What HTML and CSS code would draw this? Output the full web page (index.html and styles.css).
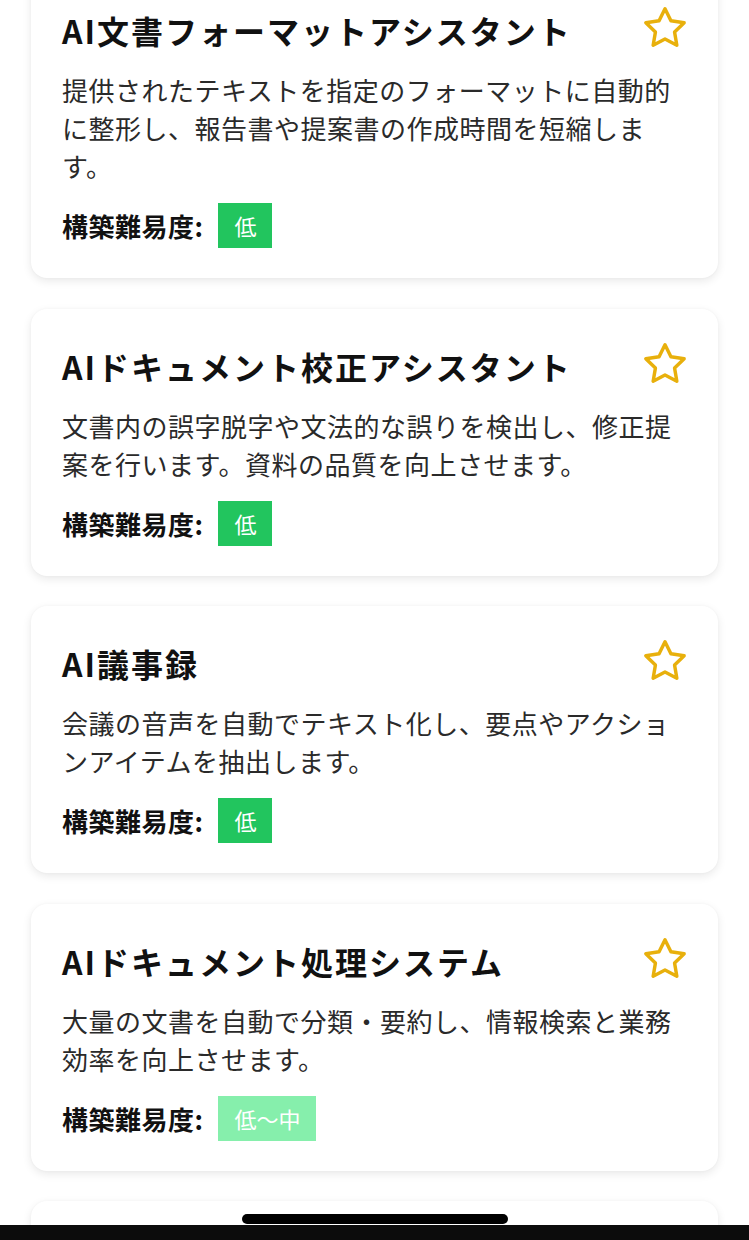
FILE: index.html
```html
<!DOCTYPE html>
<html lang="ja">
<head>
<meta charset="utf-8">
<title>AIツール一覧</title>
<link rel="stylesheet" href="styles.css">
</head>
<body>
<main class="list">
  <article class="card">
    <header class="card-head">
      <h2 class="card-title">AI文書フォーマットアシスタント</h2>
      <svg class="star" viewBox="0 0 24 24"><path d="M12 2l3.09 6.26L22 9.27l-5 4.87 1.18 6.88L12 17.77l-6.18 3.25L7 14.14 2 9.27l6.91-1.01L12 2z"/></svg>
    </header>
    <p class="card-desc">提供されたテキストを指定のフォーマットに自動的に整形し、報告書や提案書の作成時間を短縮します。</p>
    <div class="level"><span class="level-label">構築難易度:</span><span class="badge badge-low">低</span></div>
  </article>
  <article class="card">
    <header class="card-head">
      <h2 class="card-title">AIドキュメント校正アシスタント</h2>
      <svg class="star" viewBox="0 0 24 24"><path d="M12 2l3.09 6.26L22 9.27l-5 4.87 1.18 6.88L12 17.77l-6.18 3.25L7 14.14 2 9.27l6.91-1.01L12 2z"/></svg>
    </header>
    <p class="card-desc">文書内の誤字脱字や文法的な誤りを検出し、修正提案を行います。資料の品質を向上させます。</p>
    <div class="level"><span class="level-label">構築難易度:</span><span class="badge badge-low">低</span></div>
  </article>
  <article class="card">
    <header class="card-head">
      <h2 class="card-title">AI議事録</h2>
      <svg class="star" viewBox="0 0 24 24"><path d="M12 2l3.09 6.26L22 9.27l-5 4.87 1.18 6.88L12 17.77l-6.18 3.25L7 14.14 2 9.27l6.91-1.01L12 2z"/></svg>
    </header>
    <p class="card-desc">会議の音声を自動でテキスト化し、要点やアクションアイテムを抽出します。</p>
    <div class="level"><span class="level-label">構築難易度:</span><span class="badge badge-low">低</span></div>
  </article>
  <article class="card">
    <header class="card-head">
      <h2 class="card-title">AIドキュメント処理システム</h2>
      <svg class="star" viewBox="0 0 24 24"><path d="M12 2l3.09 6.26L22 9.27l-5 4.87 1.18 6.88L12 17.77l-6.18 3.25L7 14.14 2 9.27l6.91-1.01L12 2z"/></svg>
    </header>
    <p class="card-desc">大量の文書を自動で分類・要約し、情報検索と業務効率を向上させます。</p>
    <div class="level"><span class="level-label">構築難易度:</span><span class="badge badge-lowmid">低〜中</span></div>
  </article>
  <div class="card card-peek"></div>
</main>
<div class="home-bar"></div>
<div class="home-indicator"></div>
</body>
</html>
```

FILE: styles.css
```css
html, body {
  margin: 0;
  padding: 0;
  background: #ffffff;
}

body {
  font-family: "Noto Sans CJK JP", "Noto Sans", sans-serif;
  color: #111111;
  overflow: hidden;
  height: 1240px;
}

.list {
  display: flex;
  flex-direction: column;
  gap: 30.5px;
  padding: 0 31px;
  margin-top: -27px;
}

.card {
  background: #ffffff;
  border-radius: 16px;
  box-shadow: 0 3px 10px rgba(0, 0, 0, 0.09), 0 0 3px rgba(0, 0, 0, 0.03);
  padding: 32px 30px 30px 31px;
}

.card-peek {
  height: 60px;
  padding: 0;
}

.card-head {
  display: flex;
  align-items: center;
  justify-content: space-between;
  height: 46px;
}

.card-title {
  margin: 4px 0 0 0;
  font-size: 32px;
  font-weight: 700;
  letter-spacing: 2px;
  line-height: 44px;
  color: #111111;
}

.star {
  width: 46px;
  height: 46px;
  flex: none;
  fill: none;
  stroke: #e8b00c;
  stroke-width: 1.8;
  stroke-linejoin: round;
  stroke-linecap: round;
}

.card-desc {
  margin: 20px 0 0 0;
  font-size: 26px;
  letter-spacing: 0.5px;
  line-height: 38px;
  color: #2a2a2a;
  padding-right: 1px;
}

.level {
  display: flex;
  align-items: center;
  gap: 15px;
  margin-top: 18px;
}

.level-label {
  font-size: 26px;
  font-weight: 700;
  letter-spacing: 0.5px;
  color: #111111;
}

.badge {
  display: inline-block;
  height: 45px;
  line-height: 45px;
  padding: 0 16px;
  font-size: 22px;
  color: #ffffff;
}

.badge-low {
  background: #22c55e;
}

.badge-lowmid {
  background: #86efac;
}

.home-bar {
  position: fixed;
  left: 0;
  right: 0;
  bottom: 0;
  height: 15px;
  background: #0c0c0c;
}

.home-indicator {
  position: fixed;
  left: 242px;
  width: 266px;
  bottom: 16px;
  height: 10px;
  border-radius: 5px;
  background: #000000;
}
```
